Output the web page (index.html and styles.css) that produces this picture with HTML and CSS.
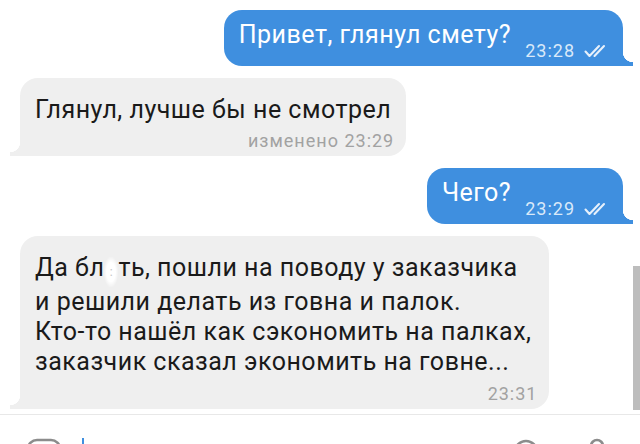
FILE: index.html
```html
<!DOCTYPE html>
<html lang="ru">
<head>
  <meta charset="UTF-8" />
  <meta name="viewport" content="width=device-width, initial-scale=1.0"/>
  <title>Чат</title>
  <link rel="stylesheet" href="styles.css">
</head>
<body>
  <div class="chat">
    <div class="row out">
      <div class="bubble out-bubble">
        <span class="text">Привет, глянул смету?</span>
        <span class="meta">23:28
          <svg class="checks" width="22" height="14" viewBox="0 0 22 14"><path d="M1.5 7.5 L5.5 12 L15 2 M10.5 12 L20 2" fill="none" stroke="currentColor" stroke-width="2.1" stroke-linecap="round" stroke-linejoin="round"/></svg>
        </span>
      </div>
    </div>

    <div class="row in">
      <div class="bubble in-bubble">
        <div class="text">Глянул, лучше бы не смотрел</div>
        <div class="meta-line">изменено 23:29</div>
      </div>
    </div>

    <div class="row out">
      <div class="bubble out-bubble">
        <span class="text">Чего?</span>
        <span class="meta">23:29
          <svg class="checks" width="22" height="14" viewBox="0 0 22 14"><path d="M1.5 7.5 L5.5 12 L15 2 M10.5 12 L20 2" fill="none" stroke="currentColor" stroke-width="2.1" stroke-linecap="round" stroke-linejoin="round"/></svg>
        </span>
      </div>
    </div>

    <div class="row in">
      <div class="bubble in-bubble long">
        <div class="text">Да бл<span class="censor">:</span>ть, пошли на поводу у заказчика<br>и решили делать из говна и палок.<br>Кто-то нашёл как сэкономить на палках,<br>заказчик сказал экономить на говне...</div>
        <div class="meta-line">23:31</div>
      </div>
    </div>
    <div class="scrollbar"></div>
  </div>

  <div class="composer">
    <svg class="icon" width="36" height="12" viewBox="0 0 36 12"><rect x="2" y="2" width="32" height="30" rx="9" fill="none" stroke="#8c8c8c" stroke-width="2.6"/></svg>
    <span class="cursor"></span>
    <span class="spacer"></span>
    <svg class="icon" width="28" height="12" viewBox="0 0 28 12"><circle cx="14" cy="14" r="11" fill="none" stroke="#8c8c8c" stroke-width="2.6"/></svg>
    <svg class="icon mic" width="18" height="12" viewBox="0 0 18 12"><rect x="3" y="2" width="12" height="22" rx="6" fill="none" stroke="#8c8c8c" stroke-width="2.6"/></svg>
  </div>
</body>
</html>
```

FILE: styles.css
```css
body { margin: 0; background: #fff; font-family: Roboto, "Noto Sans", sans-serif; color: #1a1a1a; width: 640px; height: 444px; overflow: hidden; }
.chat { position: relative; height: 415px; border-bottom: 1px solid #e8e8e8; box-sizing: border-box; padding: 10px 17px 0 20px; }
.row { display: flex; margin-bottom: 12px; }
.row.out { justify-content: flex-end; }
.row.in { justify-content: flex-start; }

.bubble { position: relative; border-radius: 18px; }
.out-bubble { background: #3f8fdf; color: #fff; border-bottom-right-radius: 0; display: flex; align-items: flex-end; padding: 10px 17px 5px 15px; }
.out-bubble::after { content: ""; position: absolute; right: -10px; bottom: 0; width: 10px; height: 14px; background: radial-gradient(circle at 100% 0, transparent 10px, #3f8fdf 10.5px); }
.out-bubble .text { margin-bottom: 11px; }
.in-bubble { background: #efefef; border-bottom-left-radius: 0; padding: 17px 15px 5px 15px; }
.in-bubble::after { content: ""; position: absolute; left: -10px; bottom: 0; width: 10px; height: 14px; background: radial-gradient(circle at 0 0, transparent 10px, #efefef 10.5px); }

.text { font-size: 25px; line-height: 30px; letter-spacing: 0.5px; }
.meta { font-size: 18px; line-height: 20px; letter-spacing: 1px; color: #d9e9f9; margin-left: 14px; display: flex; align-items: center; gap: 9px; }
.checks { color: #e6f0fb; }
.meta-line { font-size: 18px; line-height: 20px; letter-spacing: 1px; color: #a2a2a2; text-align: right; margin: 6px -3px 0 0; }
.long { padding-right: 18px; }
.long .meta-line { margin-top: 7px; margin-right: -6px; }
.censor { display: inline-block; width: 14px; text-align: center; font-size: 12px; color: #c4c4c4; background: radial-gradient(ellipse at center, #fff 45%, rgba(255,255,255,0) 75%); }

.scrollbar { position: absolute; right: 0; top: 266px; width: 7px; height: 144px; background: #bdbdbd; }

.composer { display: flex; align-items: flex-start; padding: 23px 34px 0 26px; height: 28px; }
.icon { display: block; }
.cursor { width: 2px; height: 10px; background: #3f8fdf; margin-left: 20px; }
.spacer { flex: 1; }
.mic { margin-left: 48px; }
```
